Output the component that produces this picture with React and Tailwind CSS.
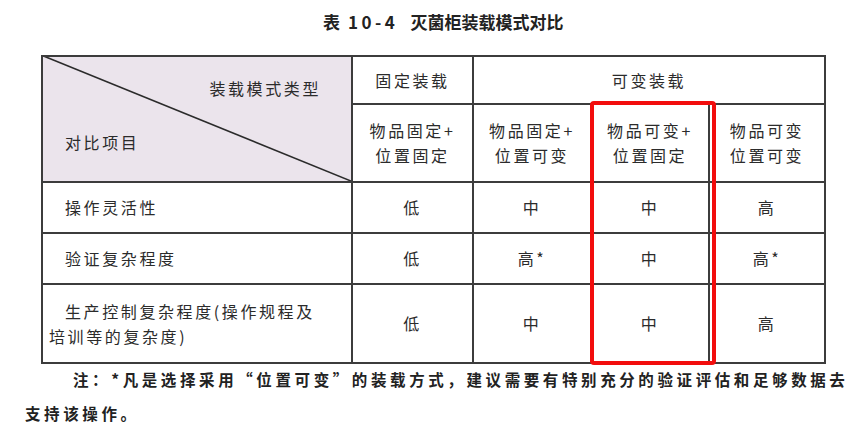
import React from 'react';

const font = { fontFamily: '"Noto Sans CJK SC", "Noto Sans", sans-serif' };

const Cell = ({ className = '', children }) => (
  <div className={`bg-white flex items-center justify-center text-center ${className}`}>{children}</div>
);

const rows = [
  { label: '操作灵活性', vals: ['低', '中', '中', '高'], h: 'h-[49px]' },
  { label: '验证复杂程度', vals: ['低', '高*', '中', '高*'], h: 'h-[49px]' },
  {
    label: (
      <>
        生产控制复杂程度(操作规程及
        <br />
        <span className="-ml-[16px]">培训等的复杂度)</span>
      </>
    ),
    vals: ['低', '中', '中', '高'],
    h: 'h-[77px]',
  },
];

export default function App() {
  return (
    <div className="relative w-[865px] h-[437px] bg-white text-[#2b2b2b] overflow-hidden" style={font}>
      {/* 标题 */}
      <div className="flex items-center h-[44px] pl-[323px] font-bold text-[17px] text-[#222]">
        <span>表</span>
        <span className="ml-[8px] tracking-[3.5px]">10-4</span>
        <span className="ml-[12px]">灭菌柜装载模式对比</span>
      </div>

      {/* 表格 */}
      <div className="ml-[41px] mt-[11px] w-[785px] bg-[#3c3c3c] p-[2px] grid grid-cols-[308px_119px_116px_116px_114px] gap-[2px] text-[16px] tracking-[2.6px] leading-[25px]">
        <div className="relative row-span-2 bg-[#ebe4ec] h-[124px]">
          <svg className="absolute inset-0 w-full h-full" viewBox="0 0 308 124" preserveAspectRatio="none">
            <line x1="-2" y1="-2" x2="308" y2="124" stroke="#2b2b2b" strokeWidth="1.6" />
          </svg>
          <span className="absolute right-[30px] top-[19px]">装载模式类型</span>
          <span className="absolute left-[22px] top-[73px]">对比项目</span>
        </div>
        <Cell className="h-[46px]">固定装载</Cell>
        <Cell className="col-span-3 h-[46px]">可变装载</Cell>
        <Cell className="h-[76px]">物品固定+<br />位置固定</Cell>
        <Cell className="h-[76px]">物品固定+<br />位置可变</Cell>
        <Cell className="h-[76px]">物品可变+<br />位置固定</Cell>
        <Cell className="h-[76px] bg-[#f7eef8]">物品可变<br />位置可变</Cell>
        {rows.map((r, i) => (
          <React.Fragment key={i}>
            <div className={`bg-white flex items-center pl-[22px] ${r.h}`}>
              <div>{r.label}</div>
            </div>
            {r.vals.map((v, j) => (
              <Cell key={j} className={r.h}>{v}</Cell>
            ))}
          </React.Fragment>
        ))}
      </div>

      {/* 红框标注 */}
      <div className="absolute left-[590px] top-[101px] w-[126px] h-[264px] border-[4px] border-[#f20d0d] rounded-[4px] pointer-events-none" />

      {/* 注释 */}
      <div className="-mt-[2px] pl-[25px] font-bold text-[15.5px] tracking-[3.6px] text-[#222] leading-[34px] whitespace-nowrap">
        <div className="pl-[48px]">注：*凡是选择采用“位置可变”的装载方式，建议需要有特别充分的验证评估和足够数据去</div>
        <div>支持该操作。</div>
      </div>
    </div>
  );
}
